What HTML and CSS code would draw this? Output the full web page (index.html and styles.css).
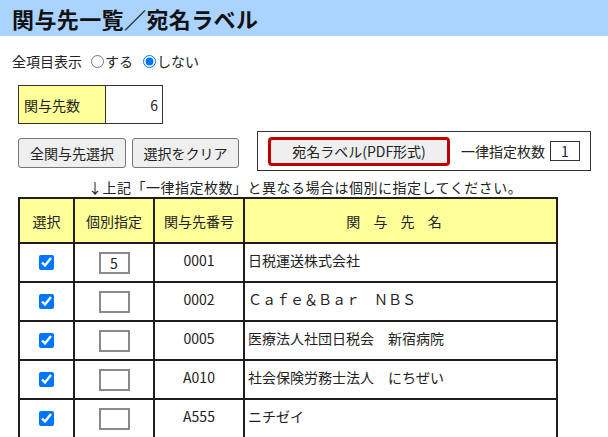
FILE: index.html
```html
<!DOCTYPE html>
<html lang="ja">
<head>
<meta charset="utf-8">
<title>関与先一覧／宛名ラベル</title>
<link rel="stylesheet" href="styles.css">
</head>
<body>
<h1 class="title">関与先一覧／宛名ラベル</h1>
<div class="opts">
  <span>全項目表示</span>
  <label class="radio r1"><input type="radio" name="all">する</label>
  <label class="radio r2"><input type="radio" name="all" checked>しない</label>
</div>
<table class="count">
  <tr><th>関与先数</th><td>6</td></tr>
</table>
<div class="actions">
  <button class="btn b1">全関与先選択</button>
  <button class="btn b2">選択をクリア</button>
  <div class="frame">
    <button class="btn pdf">宛名ラベル(PDF形式)</button>
    <span class="lbl">一律指定枚数</span>
    <input class="num" type="text" value="1">
  </div>
</div>
<p class="note">↓上記「一律指定枚数」と異なる場合は個別に指定してください。</p>
<table class="list">
  <colgroup>
    <col class="c1"><col class="c2"><col class="c3"><col class="c4">
  </colgroup>
  <thead>
    <tr><th>選択</th><th>個別指定</th><th>関与先番号</th><th class="hname">関 与 先 名</th></tr>
  </thead>
  <tbody>
    <tr><td class="ck"><input type="checkbox" checked></td><td class="ind"><input type="text" value="5"></td><td class="code">0001</td><td class="name">日税運送株式会社</td></tr>
    <tr><td class="ck"><input type="checkbox" checked></td><td class="ind"><input type="text" value=""></td><td class="code">0002</td><td class="name">Ｃａｆｅ＆Ｂａｒ　ＮＢＳ</td></tr>
    <tr><td class="ck"><input type="checkbox" checked></td><td class="ind"><input type="text" value=""></td><td class="code">0005</td><td class="name">医療法人社団日税会　新宿病院</td></tr>
    <tr><td class="ck"><input type="checkbox" checked></td><td class="ind"><input type="text" value=""></td><td class="code">A010</td><td class="name">社会保険労務士法人　にちぜい</td></tr>
    <tr><td class="ck"><input type="checkbox" checked></td><td class="ind"><input type="text" value=""></td><td class="code">A555</td><td class="name">ニチゼイ</td></tr>
  </tbody>
</table>
</body>
</html>
```

FILE: styles.css
```css
html, body {
  margin: 0;
  padding: 0;
  background: #fff;
}
body {
  font-family: "Noto Sans CJK JP", "Noto Sans", sans-serif;
  font-size: 14px;
  color: #222;
}
.title {
  margin: 0;
  height: 36px;
  line-height: 36px;
  padding-left: 12px;
  background: #aad4ff;
  font-size: 22px;
  font-weight: bold;
  color: #111;
  letter-spacing: 0.4px;
}
.opts {
  display: flex;
  align-items: center;
  height: 22px;
  margin: 14px 0 0 12px;
}
.radio {
  display: flex;
  align-items: center;
}
.radio input {
  width: 13px;
  height: 13px;
  margin: 0 1px 0 0;
}
.r1 { margin-left: 9px; }
.r2 { margin-left: 10px; }

.count {
  border-collapse: collapse;
  margin: 13px 0 0 18px;
}
.count th, .count td {
  border: 1px solid #333;
  height: 37px;
  padding: 0;
  font-weight: normal;
}
.count th {
  width: 81px;
  background: #ffff99;
  text-align: left;
  padding-left: 5px;
}
.count td {
  width: 52px;
  text-align: right;
  padding-right: 4px;
}

.actions {
  display: flex;
  align-items: flex-start;
  margin: 7px 0 0 18px;
}
.btn {
  font-family: inherit;
  font-size: 14px;
  color: #222;
  background: #efefef;
  border: 1px solid #767676;
  border-radius: 3px;
  padding: 0;
  height: 30px;
  box-sizing: border-box;
}
.b1 { width: 108px; margin-top: 7px; }
.b2 { width: 107px; margin-top: 7px; margin-left: 6px; }
.frame {
  display: flex;
  align-items: center;
  margin-left: 18px;
  height: 40px;
  box-sizing: border-box;
  border: 1px solid #333;
  padding: 0 10px;
}
.pdf {
  width: 182px;
  height: 29px;
  border: 3px solid #c00000;
  border-radius: 4px;
}
.lbl { margin-left: 11px; }
.num {
  width: 30px;
  height: 20px;
  box-sizing: border-box;
  margin-left: 5px;
  border: 1px solid #333;
  padding: 0;
  font-family: inherit;
  font-size: 14px;
  text-align: center;
  color: #222;
}
.note {
  margin: 6px 0 0 0;
  height: 20px;
  line-height: 20px;
  padding-left: 88px;
  color: #222;
  letter-spacing: 0.5px;
}

.list {
  border-collapse: collapse;
  table-layout: fixed;
  width: 538px;
  margin-left: 18px;
}
.c1 { width: 55px; }
.c2 { width: 80px; }
.c3 { width: 90px; }
.c4 { width: 313px; }
.list th, .list td {
  border: 2px solid #1e1e1e;
  padding: 0;
  vertical-align: middle;
}
.list th {
  background: #ffff99;
  font-weight: normal;
  height: 43px;
  text-align: center;
}
.list th.hname { letter-spacing: 5px; text-indent: -8px; }
.list td { height: 37px; line-height: 20px; }
.ck, .ind, .code { text-align: center; }
.ck input {
  display: block;
  width: 15px;
  height: 15px;
  margin: 0 auto;
}
.ind input {
  display: block;
  width: 31px;
  height: 22px;
  box-sizing: border-box;
  margin: 0 auto;
  border: 2px solid #8a8a8a;
  padding: 0;
  font-family: inherit;
  font-size: 14px;
  text-align: center;
  color: #222;
}
.list td.code {
  padding-bottom: 5px;
  height: 32px;
}
.list td.name {
  padding: 0 0 5px 3px;
  height: 32px;
}
```
